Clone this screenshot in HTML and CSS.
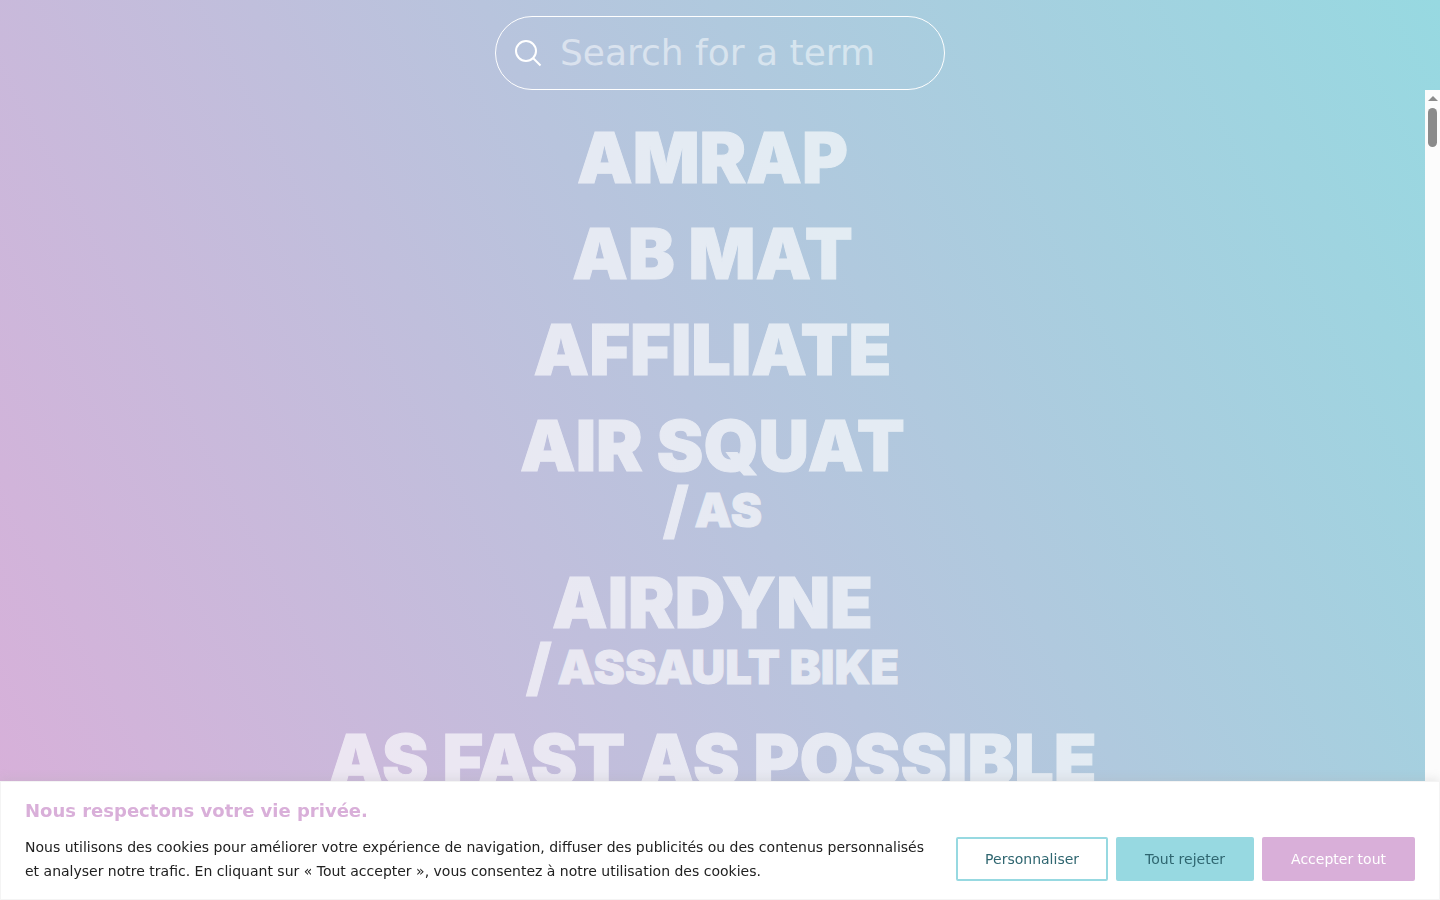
FILE: index.html
```html
<!DOCTYPE html>
<html lang="fr">
<head>
<meta charset="utf-8">
<meta name="viewport" content="width=device-width, initial-scale=1">
<title>Glossary</title>
<link rel="stylesheet" href="styles.css">
</head>
<body>
<div class="page">
  <header class="top">
    <form class="search" role="search">
      <label class="search-label" for="term" aria-label="Search for a term">
        <svg class="search-icon" viewBox="0 0 28 28" aria-hidden="true"><circle cx="12" cy="12" r="10"/><path d="M19 19l7.500 7.500"/></svg>
      </label>
      <input class="search-input" id="term" type="text" placeholder="Search for a term">
    </form>
  </header>
  <main class="glossary">
    <ul class="terms">
      <li><a class="term" href="#amrap">AMRAP</a></li>
      <li><a class="term" href="#ab-mat">AB MAT</a></li>
      <li><a class="term" href="#affiliate">AFFILIATE</a></li>
      <li><a class="term" href="#air-squat">AIR SQUAT<span class="alias"><span class="slash">/</span>AS</span></a></li>
      <li><a class="term" href="#airdyne">AIRDYNE<span class="alias"><span class="slash">/</span>ASSAULT BIKE</span></a></li>
      <li><a class="term" href="#afap">AS FAST AS POSSIBLE</a></li>
    </ul>
    <div class="scrollbar" aria-hidden="true"><span class="arrow"></span><span class="thumb"></span></div>
  </main>
</div>
<section class="consent" aria-labelledby="consent-title">
  <h2 class="consent-title" id="consent-title">Nous respectons votre vie privée.</h2>
  <div class="consent-body">
    <p class="consent-text">Nous utilisons des cookies pour améliorer votre expérience de navigation, diffuser des publicités ou des contenus personnalisés et analyser notre trafic. En cliquant sur « Tout accepter », vous consentez à notre utilisation des cookies.</p>
    <div class="consent-actions">
      <button class="btn btn-outline" type="button">Personnaliser</button>
      <button class="btn btn-reject" type="button">Tout rejeter</button>
      <button class="btn btn-accept" type="button">Accepter tout</button>
    </div>
  </div>
</section>
</body>
</html>
```
FILE: styles.css
```css
* { box-sizing: border-box; }
body {
  margin: 0;
  font-family: "DejaVu Sans", sans-serif;
}
.page {
  height: 100vh;
  display: flex;
  flex-direction: column;
  overflow: hidden;
  background: linear-gradient(62deg, #d9afd9 0%, #97d9e1 100%);
}
.top {
  display: flex;
  justify-content: center;
  padding-top: 16px;
}
.search {
  display: flex;
  align-items: center;
  width: 450px;
  max-width: 100%;
  height: 74px;
  padding: 0 18px;
  gap: 18px;
  border: 1px solid #fff;
  border-radius: 37px;
}
.search-label { display: flex; }
.search-icon {
  width: 28px;
  height: 28px;
  fill: none;
  stroke: #fff;
  stroke-width: 2;
}
.search-input {
  flex: 1;
  min-width: 0;
  padding: 0 0 2px;
  border: 0;
  outline: 0;
  background: transparent;
  color: #fff;
  font: 36px "DejaVu Sans", sans-serif;
}
.search-input::placeholder { color: rgba(255, 255, 255, 0.5); opacity: 1; }
.glossary {
  flex: 1;
  min-height: 0;
  display: flex;
}
.terms {
  flex: 1;
  margin: 0;
  padding: 20px 0 0;
  overflow: hidden;
  list-style: none;
  text-align: center;
}
.term {
  display: block;
  padding: 12px 0;
  color: #fff;
  opacity: 0.65;
  font: 900 70px/72px Inter, sans-serif;
  -webkit-text-stroke: 1px #fff;
  paint-order: stroke fill;
  text-decoration: none;
}
.alias {
  display: flex;
  justify-content: center;
  align-items: center;
  gap: 6px;
  padding-bottom: 6px;
  font-size: 47px;
  line-height: 55px;
}
.slash {
  font-size: 62px;
}
.scrollbar {
  width: 15px;
  display: flex;
  flex-direction: column;
  align-items: center;
  gap: 7px;
  padding-top: 6px;
  background: #fcfcfc;
}
.arrow {
  border: 5px solid transparent;
  border-top-width: 0;
  border-bottom-color: #8b8b8b;
}
.thumb {
  width: 9px;
  height: 39px;
  border-radius: 5px;
  background: #8b8b8b;
}
.consent {
  position: fixed;
  left: 0;
  right: 0;
  bottom: 0;
  padding: 16px 24px;
  border: 1px solid #f4f4f4;
  background: #fff;
  box-shadow: 0 -1px 10px rgba(172, 171, 171, 0.3);
}
.consent-title {
  margin: 0 0 11px;
  color: #d9afd9;
  font-size: 18px;
  line-height: 26px;
}
.consent-body {
  display: flex;
  align-items: center;
  gap: 32px;
}
.consent-text {
  flex: 1;
  margin: 0;
  color: #212121;
  font-size: 14px;
  line-height: 24px;
}
.consent-actions { display: flex; gap: 8px; }
.btn {
  padding: 8px 27px;
  border: 2px solid #97d9e1;
  border-radius: 2px;
  font: 14px/24px "DejaVu Sans", sans-serif;
}
.btn-outline { background: transparent; color: #2f6670; }
.btn-reject { background: #97d9e1; color: #2f6670; }
.btn-accept { border-color: #d9afd9; background: #d9afd9; color: #fff; }
```
